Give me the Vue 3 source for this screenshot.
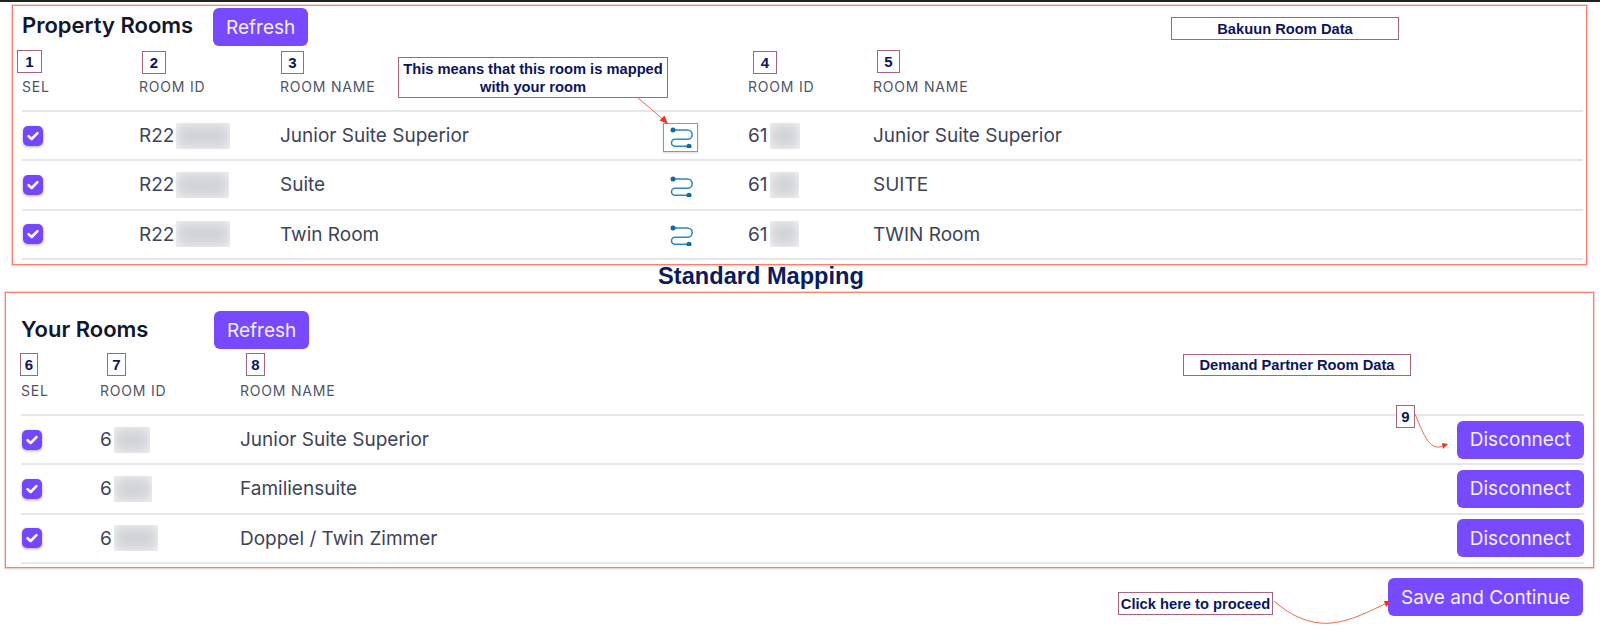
<script setup>
import { reactive } from 'vue';

// Property rooms on the left, Bakuun data on the right
const propertyRooms = reactive([
  { id: 'R22', mask: 54, name: 'Junior Suite Superior', otherId: '61', otherMask: 30, otherName: 'Junior Suite Superior' },
  { id: 'R22', mask: 53, name: 'Suite', otherId: '61', otherMask: 29, otherName: 'SUITE' },
  { id: 'R22', mask: 54, name: 'Twin Room', otherId: '61', otherMask: 29, otherName: 'TWIN Room' },
]);

const yourRooms = reactive([
  { id: '6', mask: 36, name: 'Junior Suite Superior' },
  { id: '6', mask: 38, name: 'Familiensuite' },
  { id: '6', mask: 44, name: 'Doppel / Twin Zimmer' },
]);

const numbers = [1, 2, 3, 4, 5, 6, 7, 8, 9];
</script>

<template>
  <div class="page">
    <div class="topbar"></div>

    <section class="panel panel-top">
      <div class="head">
        <h2 class="title">Property Rooms</h2>
        <button class="btn">Refresh</button>
      </div>
      <div class="grid-top thead">
        <span>SEL</span>
        <span>ROOM ID</span>
        <span>ROOM NAME</span>
        <span></span>
        <span>ROOM ID</span>
        <span>ROOM NAME</span>
      </div>
      <div v-for="room in propertyRooms" :key="room.name" class="grid-top row">
        <span class="check">
          <svg width="14" height="14" viewBox="0 0 14 14">
            <path d="M2.6 7.2 5.7 10 11.4 4.2" fill="none" stroke="#fff" stroke-width="2.6" stroke-linecap="round" stroke-linejoin="round" />
          </svg>
        </span>
        <span class="id">{{ room.id }}<i class="mask" :style="{ width: room.mask + 'px' }"><b></b></i></span>
        <span>{{ room.name }}</span>
        <span class="link">
          <svg width="26" height="24" viewBox="0 -2.500 26 24">
            <path d="M4 3.500H18.500a4.600 4.600 0 0 1 0 9.300H6a3.400 3.400 0 0 0 0 7H20" fill="none" stroke="#2f87bd" stroke-width="1.600" />
            <circle cx="4" cy="3.500" r="2.500" fill="#0f6aa6" />
            <circle cx="20" cy="19.800" r="2.500" fill="#0f6aa6" />
          </svg>
        </span>
        <span class="id">{{ room.otherId }}<i class="mask" :style="{ width: room.otherMask + 'px' }"><b></b></i></span>
        <span>{{ room.otherName }}</span>
      </div>
    </section>

    <h3 class="mapping">Standard Mapping</h3>

    <section class="panel panel-bottom">
      <div class="head">
        <h2 class="title">Your Rooms</h2>
        <button class="btn">Refresh</button>
      </div>
      <div class="grid-bottom thead">
        <span>SEL</span>
        <span>ROOM ID</span>
        <span>ROOM NAME</span>
      </div>
      <div v-for="room in yourRooms" :key="room.name" class="grid-bottom row">
        <span class="check">
          <svg width="14" height="14" viewBox="0 0 14 14">
            <path d="M2.6 7.2 5.7 10 11.4 4.2" fill="none" stroke="#fff" stroke-width="2.6" stroke-linecap="round" stroke-linejoin="round" />
          </svg>
        </span>
        <span class="id">{{ room.id }}<i class="mask" :style="{ width: room.mask + 'px' }"><b></b></i></span>
        <span>{{ room.name }}</span>
        <button class="btn">Disconnect</button>
      </div>
    </section>

    <div class="footer">
      <button class="btn">Save and Continue</button>
    </div>

    <!-- annotations on top of the screenshot -->
    <span v-for="n in numbers" :key="n" class="note num" :class="'num-' + n">{{ n }}</span>
    <span class="note data-bakuun">Bakuun Room Data</span>
    <span class="note data-partner">Demand Partner Room Data</span>
    <span class="note means">This means that this room is mapped with your room</span>
    <span class="note proceed">Click here to proceed</span>
    <span class="icon-frame"></span>

    <svg class="arrows" width="1600" height="631" viewBox="0 0 1600 631">
      <path d="M638 98 664 120" fill="none" stroke="#f4664f" stroke-width="1" />
      <path d="M668 124 659.500 120.500 664.500 115.500Z" fill="#f2331c" />
      <path d="M1415 414C1421 428 1427 446 1437 447C1440 447.500 1442 446 1444 445" fill="none" stroke="#f4664f" stroke-width="1" />
      <path d="M1448 444 1443 449 1442 443Z" fill="#f2331c" />
      <path d="M1274 601C1292 617 1312 625 1332 623C1352 621 1374 609 1387 603" fill="none" stroke="#f4664f" stroke-width="1" />
      <path d="M1391 601 1386 607 1384 601Z" fill="#f2331c" />
    </svg>
  </div>
</template>

<style scoped>
.page {
  position: relative;
  width: 1600px;
  height: 631px;
  overflow: hidden;
  background: #fff;
  font-family: Inter, "Liberation Sans", sans-serif;
  color: #3d4459;
}
.topbar {
  height: 2px;
  margin-bottom: 3px;
  background: #222;
}
.panel {
  box-sizing: border-box;
  border: 1px solid #f7806f;
  box-shadow: 0 0 0 1px rgba(247, 128, 111, 0.3), 0 1px 3px rgba(0, 0, 0, 0.12);
}
.panel-top {
  height: 260px;
  margin: 0 13px 0 12px;
  padding: 2px 3px 0 9px;
}
.panel-bottom {
  height: 276px;
  margin: 0 6px 0 5px;
  padding: 18px 9px 0 15px;
}
.head {
  display: flex;
  align-items: center;
  height: 38px;
}
.title {
  width: 191px;
  margin: 0;
  font-size: 22px;
  font-weight: 600;
  color: #12172f;
  position: relative;
  top: -2px;
}
.panel-bottom .title {
  width: 193px;
  top: -1px;
}
.btn {
  height: 38px;
  padding: 0 13px;
  border: 0;
  border-radius: 6px;
  background: #7749ff;
  color: #f4f0ff;
  font-family: inherit;
  font-size: 19px;
  font-weight: 400;
  white-space: nowrap;
}
.thead {
  height: 66px;
  padding-bottom: 15px;
  box-sizing: border-box;
  align-items: end;
  border-bottom: 2px solid #e6e7ea;
  font-size: 14px;
  letter-spacing: 0.8px;
  color: #4f5566;
}
.grid-top {
  display: grid;
  grid-template-columns: 117px 141px 389px 79px 125px 1fr;
}
.grid-bottom {
  display: grid;
  grid-template-columns: 79px 140px 1fr auto;
}
.panel-bottom .thead {
  height: 67px;
}
.row {
  height: 49.3px;
  box-sizing: border-box;
  align-items: center;
  border-bottom: 2px solid #e6e7ea;
  font-size: 19px;
}
.check {
  display: flex;
  align-items: center;
  justify-content: center;
  width: 20px;
  height: 20px;
  margin-left: 1px;
  border-radius: 5px;
  background: #7447ff;
  box-shadow: 0 1px 3px rgba(60, 40, 160, 0.4);
}
.id {
  display: flex;
  align-items: center;
}
.mask {
  display: block;
  height: 26px;
  margin-left: 2px;
  overflow: hidden;
  background: #f7f7f8;
}
.mask b {
  display: block;
  height: 100%;
  background: #d2d3d8;
  filter: blur(6px);
}
.link {
  display: flex;
  align-items: center;
}
.mapping {
  height: 27px;
  margin: 0;
  padding-right: 78px;
  text-align: center;
  font-family: "Liberation Sans", sans-serif;
  font-size: 23.6px;
  font-weight: 700;
  line-height: 23px;
  color: #0c1a5e;
}
.footer {
  display: flex;
  justify-content: flex-end;
  padding: 10px 17px 0 0;
}
.note {
  position: absolute;
  box-sizing: border-box;
  display: flex;
  align-items: center;
  justify-content: center;
  border: 1px solid #a8647e;
  background: #fff;
  font-family: "Liberation Sans", sans-serif;
  font-size: 14.7px;
  font-weight: 700;
  color: #0b1560;
}
.num {
  height: 23px;
  font-size: 15px;
}
.num-1 { left: 17px; top: 50px; width: 25px; }
.num-2 { left: 142px; top: 51px; width: 24px; }
.num-3 { left: 281px; top: 51px; width: 23px; }
.num-4 { left: 753px; top: 51px; width: 24px; }
.num-5 { left: 877px; top: 50px; width: 23px; }
.num-6 { left: 20px; top: 353px; width: 18px; }
.num-7 { left: 107px; top: 353px; width: 19px; }
.num-8 { left: 246px; top: 353px; width: 19px; }
.num-9 { left: 1396px; top: 405px; width: 19px; }
.data-bakuun {
  left: 1171px;
  top: 17px;
  width: 228px;
  height: 23px;
}
.data-partner {
  left: 1183px;
  top: 354px;
  width: 228px;
  height: 22px;
}
.means {
  left: 398px;
  top: 57px;
  width: 270px;
  height: 41px;
  padding: 0 4px;
  text-align: center;
  line-height: 18px;
}
.proceed {
  left: 1118px;
  top: 592px;
  width: 155px;
  height: 23px;
}
.icon-frame {
  position: absolute;
  left: 663px;
  top: 123px;
  width: 35px;
  height: 29px;
  box-sizing: border-box;
  border: 1px solid #f2735f;
  box-shadow: 0 1px 2px rgba(0, 0, 0, 0.15);
}
.arrows {
  position: absolute;
  left: 0;
  top: 0;
  pointer-events: none;
}
</style>
